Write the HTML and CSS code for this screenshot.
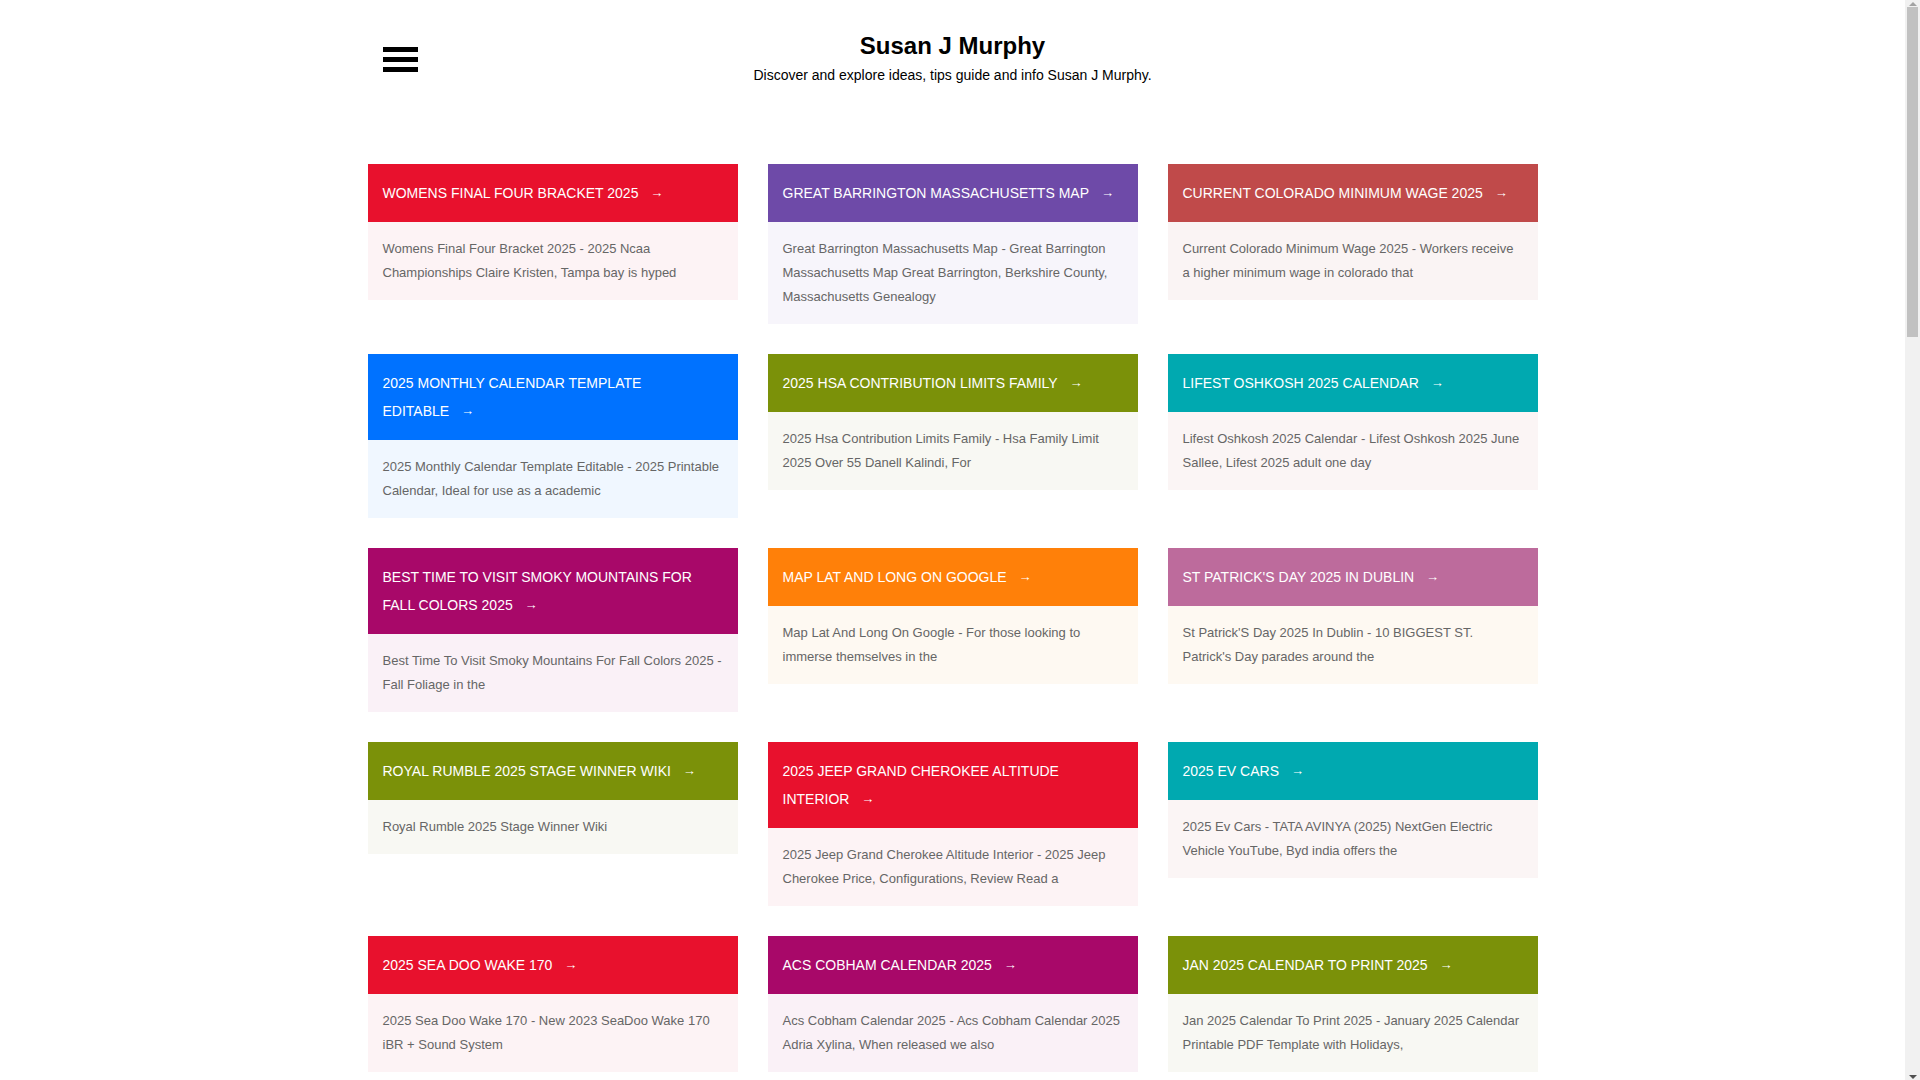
FILE: index.html
```html
<!DOCTYPE html>
<html lang="en">
<head>
<meta charset="utf-8">
<title>Susan J Murphy</title>
<link rel="stylesheet" href="styles.css">
</head>
<body>
<header class="site-header">
  <div class="menu-toggle" aria-label="Menu">
    <span class="bar"></span><span class="bar"></span><span class="bar"></span>
  </div>
  <div class="brand">
    <h1 class="site-title">Susan J Murphy</h1>
    <p class="tagline">Discover and explore ideas, tips guide and info Susan J Murphy.</p>
  </div>
  <div class="spacer"></div>
</header>

<main class="posts">
  <article class="card red"><div class="card-head">Womens Final Four Bracket 2025&nbsp;<span class="arrow">→</span></div><div class="card-body">Womens Final Four Bracket 2025 - 2025 Ncaa Championships Claire Kristen, Tampa bay is hyped</div></article>
  <article class="card purple"><div class="card-head">Great Barrington Massachusetts Map&nbsp;<span class="arrow">→</span></div><div class="card-body">Great Barrington Massachusetts Map - Great Barrington Massachusetts Map Great Barrington, Berkshire County, Massachusetts Genealogy</div></article>
  <article class="card brick"><div class="card-head">Current Colorado Minimum Wage 2025&nbsp;<span class="arrow">→</span></div><div class="card-body">Current Colorado Minimum Wage 2025 - Workers receive a higher minimum wage in colorado that</div></article>

  <article class="card blue"><div class="card-head">2025 Monthly Calendar Template Editable&nbsp;<span class="arrow">→</span></div><div class="card-body">2025 Monthly Calendar Template Editable - 2025 Printable Calendar, Ideal for use as a academic</div></article>
  <article class="card olive"><div class="card-head">2025 Hsa Contribution Limits Family&nbsp;<span class="arrow">→</span></div><div class="card-body">2025 Hsa Contribution Limits Family - Hsa Family Limit 2025 Over 55 Danell Kalindi, For</div></article>
  <article class="card teal"><div class="card-head">Lifest Oshkosh 2025 Calendar&nbsp;<span class="arrow">→</span></div><div class="card-body">Lifest Oshkosh 2025 Calendar - Lifest Oshkosh 2025 June Sallee, Lifest 2025 adult one day</div></article>

  <article class="card magenta"><div class="card-head">Best Time To Visit Smoky Mountains For Fall Colors 2025&nbsp;<span class="arrow">→</span></div><div class="card-body">Best Time To Visit Smoky Mountains For Fall Colors 2025 - Fall Foliage in the</div></article>
  <article class="card orange"><div class="card-head">Map Lat And Long On Google&nbsp;<span class="arrow">→</span></div><div class="card-body">Map Lat And Long On Google - For those looking to immerse themselves in the</div></article>
  <article class="card mauve"><div class="card-head">St Patrick'S Day 2025 In Dublin&nbsp;<span class="arrow">→</span></div><div class="card-body">St Patrick'S Day 2025 In Dublin - 10 BIGGEST ST. Patrick's Day parades around the</div></article>

  <article class="card olive"><div class="card-head">Royal Rumble 2025 Stage Winner Wiki&nbsp;<span class="arrow">→</span></div><div class="card-body">Royal Rumble 2025 Stage Winner Wiki</div></article>
  <article class="card red"><div class="card-head">2025 Jeep Grand Cherokee Altitude Interior&nbsp;<span class="arrow">→</span></div><div class="card-body">2025 Jeep Grand Cherokee Altitude Interior - 2025 Jeep Cherokee Price, Configurations, Review Read a</div></article>
  <article class="card teal"><div class="card-head">2025 Ev Cars&nbsp;<span class="arrow">→</span></div><div class="card-body">2025 Ev Cars - TATA AVINYA (2025) NextGen Electric Vehicle YouTube, Byd india offers the</div></article>

  <article class="card red"><div class="card-head">2025 Sea Doo Wake 170&nbsp;<span class="arrow">→</span></div><div class="card-body">2025 Sea Doo Wake 170 - New 2023 SeaDoo Wake 170 iBR + Sound System</div></article>
  <article class="card magenta"><div class="card-head">Acs Cobham Calendar 2025&nbsp;<span class="arrow">→</span></div><div class="card-body">Acs Cobham Calendar 2025 - Acs Cobham Calendar 2025 Adria Xylina, When released we also</div></article>
  <article class="card olive"><div class="card-head">Jan 2025 Calendar To Print 2025&nbsp;<span class="arrow">→</span></div><div class="card-body">Jan 2025 Calendar To Print 2025 - January 2025 Calendar Printable PDF Template with Holidays,</div></article>

  <article class="card blue"><div class="card-head">2025 Toyota Tacoma Trd Pro&nbsp;<span class="arrow">→</span></div><div class="card-body">2025 Toyota Tacoma Trd Pro - The new Tacoma TRD Pro arrives with a hybrid powertrain</div></article>
  <article class="card brick"><div class="card-head">Nfl Draft 2025 Location&nbsp;<span class="arrow">→</span></div><div class="card-body">Nfl Draft 2025 Location - Green Bay will host the 2025 NFL Draft at Lambeau</div></article>
  <article class="card purple"><div class="card-head">Easter Sunday 2025 Date&nbsp;<span class="arrow">→</span></div><div class="card-body">Easter Sunday 2025 Date - When is Easter in 2025, the holiday falls on</div></article>

  <article class="card orange"><div class="card-head">Masters 2025 Tickets Price&nbsp;<span class="arrow">→</span></div><div class="card-body">Masters 2025 Tickets Price - Masters Tournament 2025 tickets and packages</div></article>
  <article class="card teal"><div class="card-head">2025 Honda Pilot Trailsport&nbsp;<span class="arrow">→</span></div><div class="card-body">2025 Honda Pilot Trailsport - Honda Pilot TrailSport 2025 review, price and specs</div></article>
  <article class="card red"><div class="card-head">March Madness 2025 Schedule&nbsp;<span class="arrow">→</span></div><div class="card-body">March Madness 2025 Schedule - NCAA Tournament 2025 dates, times and</div></article>
</main>

<footer class="site-footer">
  <p>Copyright © 2025 Susan J Murphy</p>
</footer>

<div class="scrollbar" aria-hidden="true">
  <div class="sb-btn sb-up"><span class="tri-up"></span></div>
  <div class="sb-track"><div class="sb-thumb"></div></div>
  <div class="sb-btn sb-down"><span class="tri-down"></span></div>
</div>
</body>
</html>
```

FILE: styles.css
```css
html, body {
  margin: 0;
  padding: 0;
  background: #ffffff;
}

body {
  font-family: "Liberation Sans", Arial, sans-serif;
  color: #000;
  padding-right: 15px;
}

.site-header {
  width: 1170px;
  margin: 0 auto;
  padding-top: 31px;
  display: grid;
  grid-template-columns: 1fr auto 1fr;
  align-items: start;
}

.menu-toggle {
  margin-left: 15px;
  margin-top: 16px;
  width: 35px;
  display: flex;
  flex-direction: column;
  gap: 5px;
}

.menu-toggle .bar {
  display: block;
  height: 5px;
  background: #000;
}

.brand {
  text-align: center;
}

.site-title {
  margin: 0;
  font-size: 24px;
  line-height: 30px;
  font-weight: bold;
  color: #000;
}

.tagline {
  margin: 4px 0 0;
  font-size: 14px;
  line-height: 20px;
  color: #000;
}

.posts {
  width: 1170px;
  margin: 79px auto 0;
  display: grid;
  grid-template-columns: repeat(3, 1fr);
  gap: 30px;
  align-items: start;
}

.card-head {
  padding: 15px;
  font-size: 14px;
  line-height: 28px;
  color: #fff;
  text-transform: uppercase;
}

.arrow {
  margin-left: 8px;
  font-size: 13px;
  line-height: 1;
  vertical-align: 1px;
}

.card-body {
  padding: 15px;
  font-size: 13px;
  line-height: 24px;
  color: #666;
}

.red .card-head { background: #e8112d; }
.red .card-body { background: #fdf3f5; }
.purple .card-head { background: #6e4aa8; }
.purple .card-body { background: #f7f5fb; }
.brick .card-head { background: #c04a4a; }
.brick .card-body { background: #faf4f4; }
.blue .card-head { background: #0072ff; }
.blue .card-body { background: #f0f7ff; }
.olive .card-head { background: #7b9109; }
.olive .card-body { background: #f8f8f3; }
.teal .card-head { background: #00a9b0; }
.teal .card-body { background: #fbf5f5; }
.magenta .card-head { background: #a80869; }
.magenta .card-body { background: #faf1f7; }
.orange .card-head { background: #ff8009; }
.orange .card-body { background: #fef9f2; }
.mauve .card-head { background: #bd6b9c; }
.mauve .card-body { background: #fef9f2; }

.site-footer {
  width: 1170px;
  margin: 40px auto 0;
  padding: 30px 0;
  text-align: center;
  font-size: 13px;
  color: #666;
}

/* classic browser scrollbar drawn over the right edge */
.scrollbar {
  position: fixed;
  top: 0;
  right: 0;
  bottom: 0;
  width: 15px;
  background: #f1f1f1;
  display: flex;
  flex-direction: column;
}

.sb-btn {
  height: 7px;
  display: flex;
  align-items: center;
  justify-content: center;
}

.tri-up {
  width: 0;
  height: 0;
  border-left: 4px solid transparent;
  border-right: 4px solid transparent;
  border-bottom: 4px solid #a3a3a3;
}

.tri-down {
  width: 0;
  height: 0;
  border-left: 4px solid transparent;
  border-right: 4px solid transparent;
  border-top: 4px solid #505050;
}

.sb-track {
  flex: 1;
  padding: 0 2px;
}

.sb-thumb {
  height: 330px;
  background: #c1c1c1;
}
```
